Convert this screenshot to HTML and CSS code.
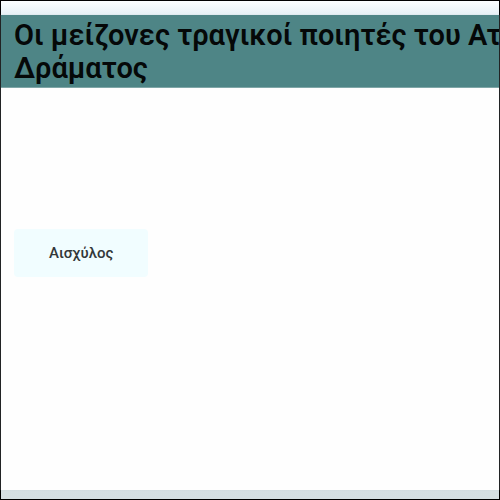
FILE: index.html
```html
<!DOCTYPE html>
<html lang="el">
<head>
<meta charset="utf-8">
<meta name="viewport" content="width=device-width, initial-scale=1">
<title>Οι μείζονες τραγικοί ποιητές</title>
<link rel="stylesheet" href="styles.css">
</head>
<body>
<main class="frame">
  <section class="card">
    <header class="card-header">
      <h1 class="title">Οι μείζονες τραγικοί ποιητές του Ατ<br>Δράματος</h1>
    </header>
    <div class="card-body">
      <button class="choice" type="button">Αισχύλος</button>
    </div>
  </section>
</main>
</body>
</html>
```
FILE: styles.css
```css
* {
  box-sizing: border-box;
}

body {
  margin: 0;
  font-family: Roboto, "Noto Sans", sans-serif;
}

.frame {
  display: flex;
  flex-direction: column;
  min-height: 100vh;
  padding: 14px 0 9px;
  border: 1px solid #000;
  background: linear-gradient(#fbfeff 0, #e5f0f5 14px, #d5dfe2 100%);
}

.card {
  display: flex;
  flex: 1;
  flex-direction: column;
  background: #fefefe;
  box-shadow: 0 0 1px #c5d0d3;
}

.card-header {
  padding: 4px 0 2px 13px;
  overflow: hidden;
  background: #4e8586;
  border-bottom: 1px solid #7fa6a7;
}

.title {
  margin: 0;
  color: #050808;
  font-size: 29px;
  font-weight: 600;
  line-height: 33px;
  white-space: nowrap;
}

.card-body {
  flex: 1;
  padding: 141px 13px 0;
}

.choice {
  padding: 14px 35px;
  border: 0;
  border-radius: 4px;
  background: #f1fdff;
  color: #333839;
  font-family: inherit;
  font-size: 15px;
  font-weight: 500;
  line-height: 20px;
}
```
